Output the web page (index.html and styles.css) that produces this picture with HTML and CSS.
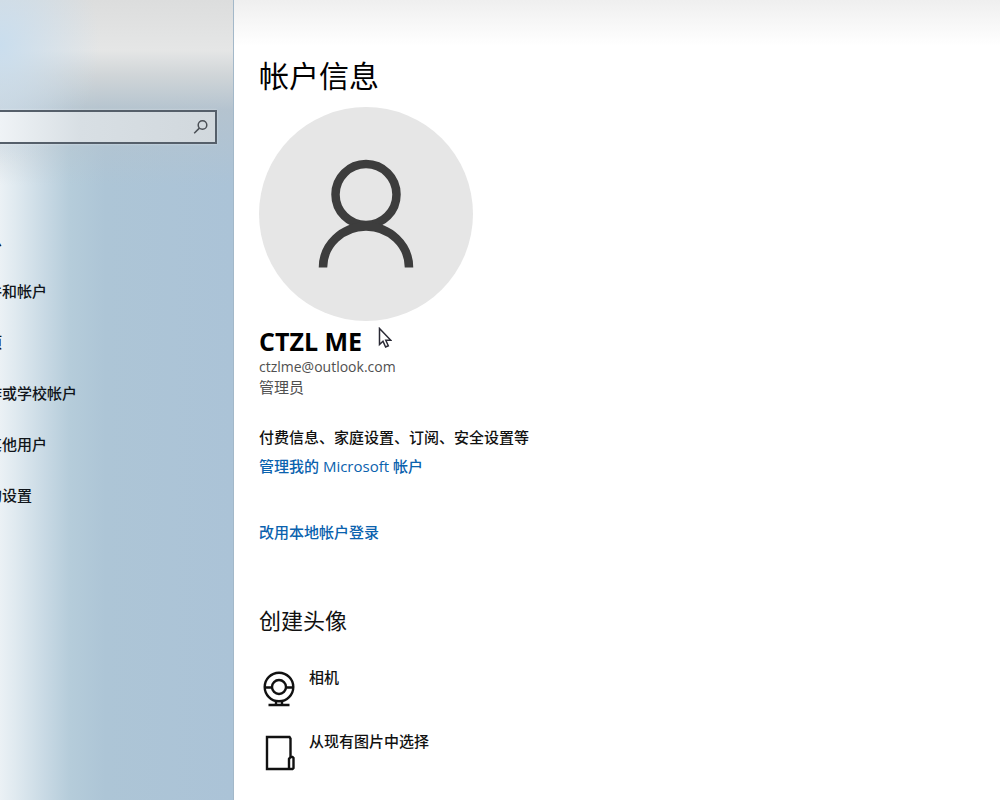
FILE: index.html
```
<!DOCTYPE html>
<html lang="zh-CN">
<head>
    <meta charset="UTF-8">
    <meta name="viewport" content="width=device-width, initial-scale=1.0">
    <title>帐户信息</title>
    <link rel="stylesheet" href="styles.css">
</head>
<body>

    <div class="settings">
        <aside class="sidebar">
            <form class="search">
                <input type="text" class="search-input" aria-label="search">
                <button type="button" class="search-btn" aria-label="search">
                    <svg width="16" height="16" viewBox="0 0 16 16">
                        <circle cx="9.5" cy="6" r="4.3"/>
                        <path d="M6.4 9.1L1.2 14.3"/>
                    </svg>
                </button>
            </form>
            <nav class="nav">
                <a href="#">息</a>
                <a href="#">件和帐户</a>
                <a href="#">项</a>
                <a href="#">作或学校帐户</a>
                <a href="#">其他用户</a>
                <a href="#">的设置</a>
            </nav>
        </aside>

        <main class="content">
            <h1>帐户信息</h1>

            <div class="avatar">
                <svg viewBox="0 0 214 214">
                    <circle cx="107" cy="87.500" r="30.5"/>
                    <path d="M64 160.5A43 41 0 0 1 150 160.5"/>
                </svg>
            </div>

            <div class="user">
                <h2 class="name">CTZL ME</h2>
                <!-- mouse pointer -->
                <svg class="cursor" width="14" height="22" viewBox="0 0 14 22">
                    <path d="M1.5 1.5V17.5L5 14.3L7.6 20L10.3 18.8L7.8 13.3H12.8Z"/>
                </svg>
            </div>
            <p class="detail email">ctzlme@outlook.com</p>
            <p class="detail">管理员</p>

            <div class="account">
                <p>付费信息、家庭设置、订阅、安全设置等</p>
                <a href="#">管理我的 Microsoft 帐户</a>
            </div>
            <a href="#" class="local">改用本地帐户登录</a>

            <h2 class="sub">创建头像</h2>
            <div class="options">
                <button type="button" class="option">
                    <svg width="40" height="40" viewBox="0 0 40 40">
                        <circle cx="20" cy="18" r="14.3"/>
                        <circle cx="20" cy="18" r="7"/>
                        <path d="M6 18.5H13M27 18.5H34M17 32V36M23 32V36M9.5 36H30.5"/>
                    </svg>
                    <span>相机</span>
                </button>
                <button type="button" class="option">
                    <svg width="40" height="40" viewBox="0 0 40 40">
                        <path d="M31.5 24V5.5L30.5 4H8V36H33.5L34.5 35V25L33.5 24H31.5L30 26V36"/>
                    </svg>
                    <span>从现有图片中选择</span>
                </button>
            </div>
        </main>
    </div>

</body>
</html>
```
FILE: styles.css
```
* {
    box-sizing: border-box;
}
body {
    font-family: 'Open Sans', 'Noto Sans CJK SC', sans-serif;
    margin: 0;
    font-size: 15px;
    line-height: 20px;
    color: #111;
    background: #fff;
}
h1, h2, p {
    margin: 0;
}
h1, h2 {
    font-weight: 400;
}
a {
    color: #0a62ae;
    text-decoration: none;
}
button {
    font: inherit;
    color: inherit;
    background: none;
    border: none;
    padding: 0;
    cursor: pointer;
}
svg {
    fill: none;
    stroke: #111;
    stroke-width: 2.4;
}
.settings {
    display: flex;
    min-height: 100vh;
}
.sidebar {
    flex: 0 0 234px;
    overflow: hidden;
    padding-top: 110px;
    border-right: 1px solid #a3b8c9;
    background:
        radial-gradient(ellipse 100px 120px at 0 45px, rgba(200, 221, 238, 0.95), rgba(200, 221, 238, 0)) no-repeat,
        linear-gradient(to bottom, #dcdddd, #e5e6e6 50px, rgba(212, 215, 216, 0.9) 75px, rgba(185, 195, 203, 0.65) 110px, rgba(173, 196, 212, 0) 185px),
        linear-gradient(to right, #ebf1f5, #e0eaf0 15px, #c8d9e4 45px, #b5ccda 70px, #adc5d6 105px, #abc3d7);
}
.search {
    display: flex;
    align-items: center;
    height: 34px;
    margin-right: 16px;
    border: 2px solid #555f6a;
    border-left: none;
    background: linear-gradient(to right, #eff3f6, #d8dfe4 80px, #d1d8dd);
    box-shadow: 0 0 2px rgba(255, 255, 255, 0.5);
}
.search-input {
    flex: 1;
    min-width: 0;
    height: 100%;
    border: none;
    outline: none;
    background: none;
    font: inherit;
}
.search-btn {
    display: flex;
    margin-right: 6px;
}
.search-btn svg {
    stroke: #4a4f55;
    stroke-width: 1.5;
}
/* menu labels run off the left edge */
.nav {
    display: flex;
    flex-direction: column;
    gap: 11px;
    margin: 76px 0 0 -13px;
}
.nav a {
    padding: 10px 0;
    font-weight: 500;
    color: #10151a;
}
.content {
    flex: 1;
    padding: 54px 26px 20px 25px;
    background: linear-gradient(to bottom, #efefef, #fff 46px);
}
h1 {
    font-size: 30px;
    line-height: 44px;
    color: #000;
}
.avatar {
    width: 214px;
    height: 214px;
    margin-top: 9px;
    border-radius: 50%;
    background: #e6e6e6;
}
.avatar svg {
    display: block;
    stroke: #3d3d3d;
    stroke-width: 8.5;
}
.user {
    display: flex;
    align-items: center;
    gap: 16px;
    height: 36px;
}
.name {
    padding-top: 4px;
    font-size: 25px;
    font-weight: 700;
    line-height: 36px;
    color: #000;
}
.cursor {
    margin-bottom: 2px;
}
.cursor path {
    fill: #fff;
    stroke: #2a2a35;
    stroke-width: 1.5;
}
.detail {
    color: #505050;
}
.email {
    font-size: 14px;
}
.account {
    margin-top: 26px;
    line-height: 29px;
}
.account,
.local,
.option {
    font-weight: 500;
}
.local {
    display: block;
    width: fit-content;
    margin-top: 41px;
}
.sub {
    margin-top: 63px;
    font-size: 22px;
    line-height: 30px;
}
.options {
    display: flex;
    flex-direction: column;
    align-items: flex-start;
    gap: 22px;
    margin-top: 32px;
}
.option {
    display: flex;
    align-items: flex-start;
    gap: 10px;
}
.option svg {
    margin-top: 2px;
}
```
